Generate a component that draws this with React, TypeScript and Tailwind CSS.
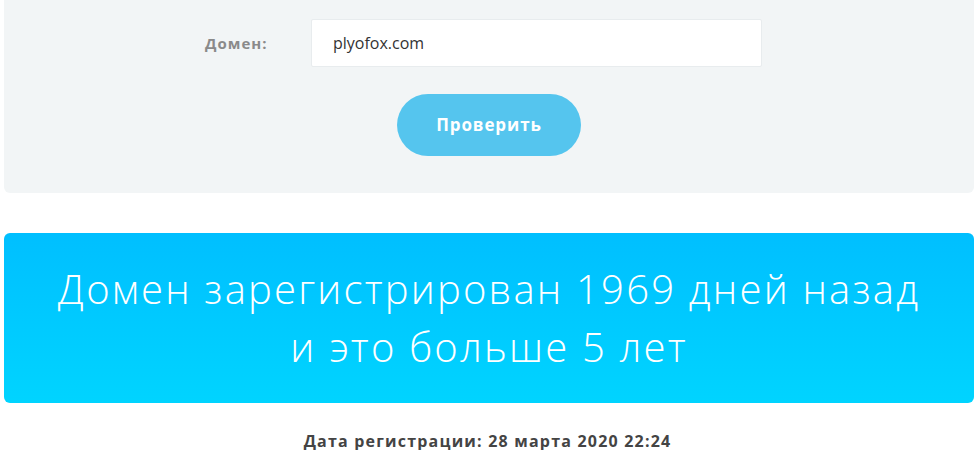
export default function App() {
  return (
    <div className="w-[975px] h-[450px] overflow-hidden bg-white" style={{ fontFamily: '"Open Sans", "Noto Sans", sans-serif' }}>
      <div className="ml-[4px] mr-[1px] bg-[#f2f5f6] rounded-b-[6px] pt-[19px] pb-[37px]">
        <div className="flex items-center pl-[201px]">
          <div className="w-[106px] text-[15px] font-bold text-[#8a8a8a] tracking-[1px]">Домен:</div>
          <div className="w-[451px] h-[48px] bg-white border border-[#e8ecee] rounded-[2px] flex items-center pl-[21px] text-[16px] text-[#333]">
            plyofox.com
          </div>
        </div>
        <div className="flex justify-center mt-[27px]">
          <button className="w-[184px] h-[62px] rounded-full bg-[#55c5ee] text-white font-bold text-[17px] tracking-[0.9px]">
            Проверить
          </button>
        </div>
      </div>
      <div className="ml-[4px] mr-[1px] mt-[40px] h-[170px] rounded-[6px] bg-gradient-to-b from-[#00bfff] to-[#00d4ff] flex flex-col items-center justify-center text-white font-light text-[40px] leading-[58px] tracking-[2.2px]">
        <div>Домен зарегистрирован 1969 дней назад</div>
        <div>и это больше 5 лет</div>
      </div>
      <div className="mt-[26px] text-center font-bold text-[16px] text-[#444] tracking-[1.2px]">
        Дата регистрации: 28 марта 2020 22:24
      </div>
    </div>
  );
}
